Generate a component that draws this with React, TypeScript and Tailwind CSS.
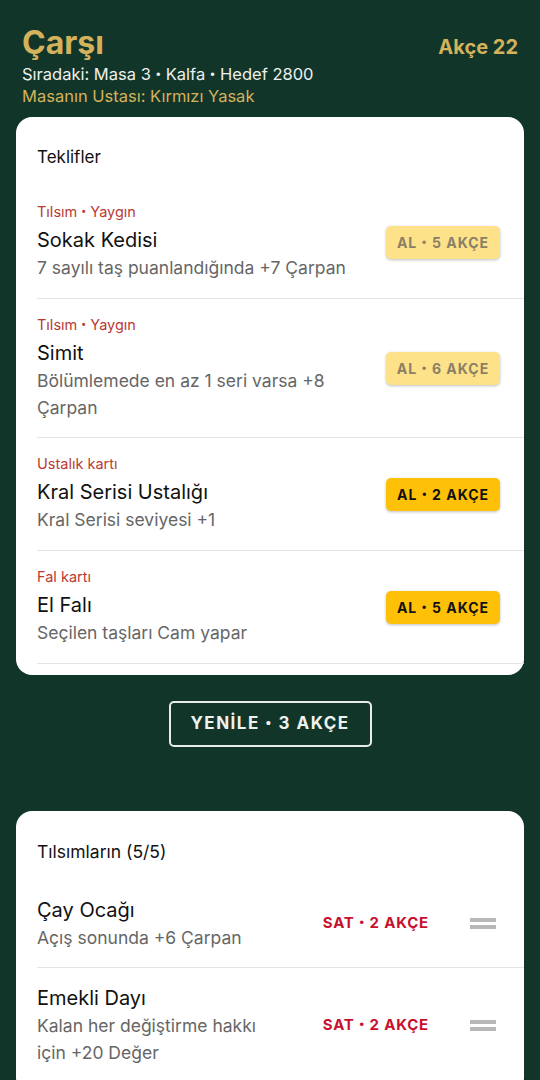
import { Fragment } from "react";

const font = { fontFamily: "Inter, Roboto, 'Noto Sans', sans-serif" };
const dotFont = { fontFamily: "Roboto, sans-serif" };

interface Offer {
  kind: string;
  name: string;
  desc: string;
  price: number;
  affordable: boolean;
}

const offers: Offer[] = [
  { kind: "Tılsım • Yaygın", name: "Sokak Kedisi", desc: "7 sayılı taş puanlandığında +7 Çarpan", price: 5, affordable: false },
  { kind: "Tılsım • Yaygın", name: "Simit", desc: "Bölümlemede en az 1 seri varsa +8 Çarpan", price: 6, affordable: false },
  { kind: "Ustalık kartı", name: "Kral Serisi Ustalığı", desc: "Kral Serisi seviyesi +1", price: 2, affordable: true },
  { kind: "Fal kartı", name: "El Falı", desc: "Seçilen taşları Cam yapar", price: 5, affordable: true },
];

const owned = [
  { name: "Çay Ocağı", desc: "Açış sonunda +6 Çarpan" },
  { name: "Emekli Dayı", desc: "Kalan her değiştirme hakkı için +20 Değer" },
];

function Dot() {
  return (
    <span className="leading-none" style={dotFont}>
      •
    </span>
  );
}

// Inter'in noktası iri duruyor, noktaları Roboto ile yaz
function Dotted({ text }: { text: string }) {
  const parts = text.split("•");
  return (
    <>
      {parts.map((p, i) => (
        <Fragment key={i}>
          {i > 0 && <Dot />}
          {p}
        </Fragment>
      ))}
    </>
  );
}

function DragHandle() {
  return (
    <div className="flex flex-col gap-[3px] w-[26px] shrink-0">
      <div className="h-[4px] bg-[#b8b8b8]" />
      <div className="h-[4px] bg-[#b8b8b8]" />
    </div>
  );
}

export default function App() {
  return (
    <div className="min-h-[1080px] bg-[#12352a] overflow-hidden" style={font}>
      {/* üst bilgi */}
      <div className="px-[22px] pt-[23px] pb-[10px]">
        <div className="flex justify-between items-baseline">
          <h1 className="text-[32px] leading-[40px] font-bold text-[#d4b25c]">Çarşı</h1>
          <span className="text-[20px] font-bold text-[#d4b25c]">Akçe 22</span>
        </div>
        <p className="h-[22px] text-[16.5px] leading-[22px] text-[#eef0ee]">
          <Dotted text="Sıradaki: Masa 3 • Kalfa • Hedef 2800" />
        </p>
        <p className="text-[16.5px] leading-[22px] text-[#d4b25c]">Masanın Ustası: Kırmızı Yasak</p>
      </div>

      <div className="mx-4 bg-white rounded-2xl pt-[28px] pb-[11px]">
        <h2 className="px-[21px] text-[17px] leading-6 text-[#111]">Teklifler</h2>
        <div className="mt-[17px] ml-[21px]">
          {offers.map((o) => (
            <div key={o.name} className="flex items-center gap-4 pr-[24px] py-4 border-b border-[#e4e4e4]">
              <div className="flex-1 min-w-0">
                <div className="h-5 text-[14.5px] leading-5 text-[#b93a33]">
                  <Dotted text={o.kind} />
                </div>
                <div className="mt-1 text-[20px] leading-7 text-[#111]">{o.name}</div>
                <div className="min-h-[28px] text-[17.5px] leading-[27px] text-[#666] max-w-[325px]">{o.desc}</div>
              </div>
              <button
                className={`shrink-0 w-[114px] h-[33px] rounded-[5px] shadow-[0_1px_3px_rgba(0,0,0,0.25)] text-[14px] font-bold tracking-[1px] ${
                  o.affordable ? "bg-[#ffc107] text-[#111]" : "bg-[#fde28a] text-[#8a8066]"
                }`}
              >
                AL <Dot /> {o.price} AKÇE
              </button>
            </div>
          ))}
        </div>
      </div>

      <div className="flex justify-center mt-[26px]">
        <button className="w-[203px] h-[46px] border-2 border-[#e6ece8] rounded-[5px] text-[17px] font-bold tracking-[1.5px] text-[#eef2ef]">
          YENİLE <Dot /> 3 AKÇE
        </button>
      </div>

      <div className="mx-4 mt-[64px] bg-white rounded-2xl pt-[29px] pb-[11px]">
        <h2 className="px-[21px] text-[17.5px] leading-6 text-[#111]">Tılsımların (5/5)</h2>
        <div className="mt-4 ml-[21px]">
          {owned.map((o) => (
            <div key={o.name} className="flex items-center pr-[28px] py-4 border-b border-[#e4e4e4]">
              <div className="flex-1 min-w-0">
                <div className="text-[20px] leading-7 text-[#111]">{o.name}</div>
                <div className="text-[17.5px] leading-[27px] text-[#666] max-w-[245px]">{o.desc}</div>
              </div>
              <span className="shrink-0 text-[15px] font-bold tracking-[0.8px] text-[#c8102e] mr-[41px]">
                SAT <Dot /> 2 AKÇE
              </span>
              <DragHandle />
            </div>
          ))}
        </div>
      </div>
    </div>
  );
}
